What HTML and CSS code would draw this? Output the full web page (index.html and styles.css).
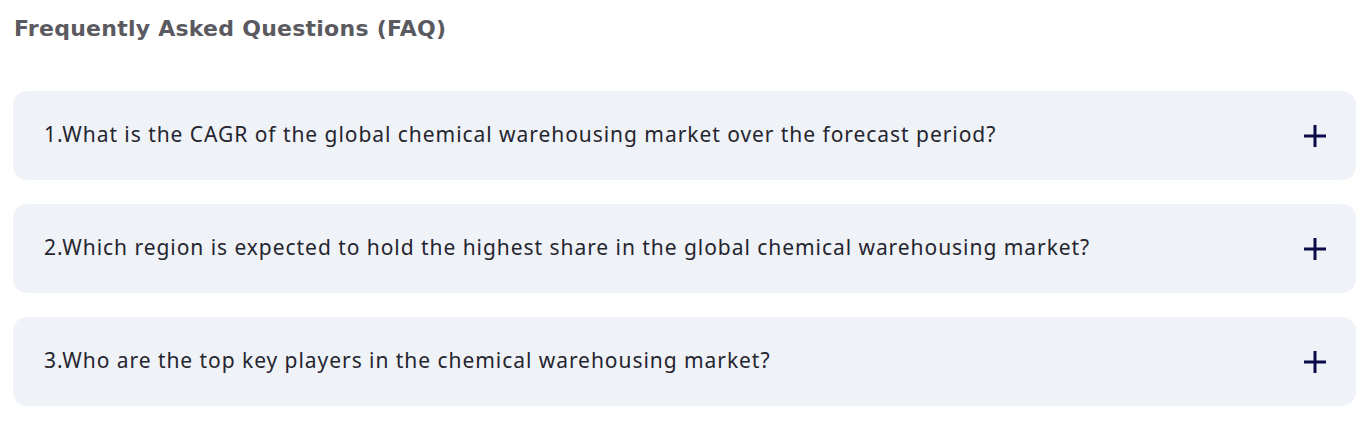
FILE: index.html
```html
<!DOCTYPE html>
<html lang="en">
<head>
<meta charset="utf-8">
<link rel="stylesheet" href="styles.css">
</head>
<body>
<section class="faq">
  <h2 class="faq-title">Frequently Asked Questions (FAQ)</h2>
  <div class="faq-list">
    <div class="faq-item">
      <span class="faq-q">1.What is the CAGR of the global chemical warehousing market over the forecast period?</span>
      <svg class="faq-icon" viewBox="0 0 22 22" width="22" height="22"><path d="M11 0V22M0 11H22" stroke="#0b0b4a" stroke-width="3"/></svg>
    </div>
    <div class="faq-item">
      <span class="faq-q">2.Which region is expected to hold the highest share in the global chemical warehousing market?</span>
      <svg class="faq-icon" viewBox="0 0 22 22" width="22" height="22"><path d="M11 0V22M0 11H22" stroke="#0b0b4a" stroke-width="3"/></svg>
    </div>
    <div class="faq-item">
      <span class="faq-q">3.Who are the top key players in the chemical warehousing market?</span>
      <svg class="faq-icon" viewBox="0 0 22 22" width="22" height="22"><path d="M11 0V22M0 11H22" stroke="#0b0b4a" stroke-width="3"/></svg>
    </div>
  </div>
</section>
</body>
</html>
```
FILE: styles.css
```css
body {
  margin: 0;
  background: #ffffff;
}
.faq {
  padding: 13px 12px 0 13px;
}
.faq-title {
  margin: 0 0 0 1px;
  font-family: "DejaVu Sans", sans-serif;
  font-weight: 700;
  font-size: 22px;
  letter-spacing: 0.25px;
  line-height: 32px;
  color: #5a5a60;
}
.faq-list {
  margin-top: 46px;
  display: flex;
  flex-direction: column;
  gap: 24px;
}
.faq-item {
  height: 89px;
  box-sizing: border-box;
  background: #eff2f7;
  border-radius: 14px;
  display: flex;
  align-items: center;
  justify-content: space-between;
  padding: 0 30px 3px 31px;
}
.faq-q {
  font-family: "Noto Sans", sans-serif;
  font-size: 21px;
  letter-spacing: 0.95px;
  color: #25252f;
}
.faq-icon {
  flex: none;
  margin-top: 3px;
}
```
